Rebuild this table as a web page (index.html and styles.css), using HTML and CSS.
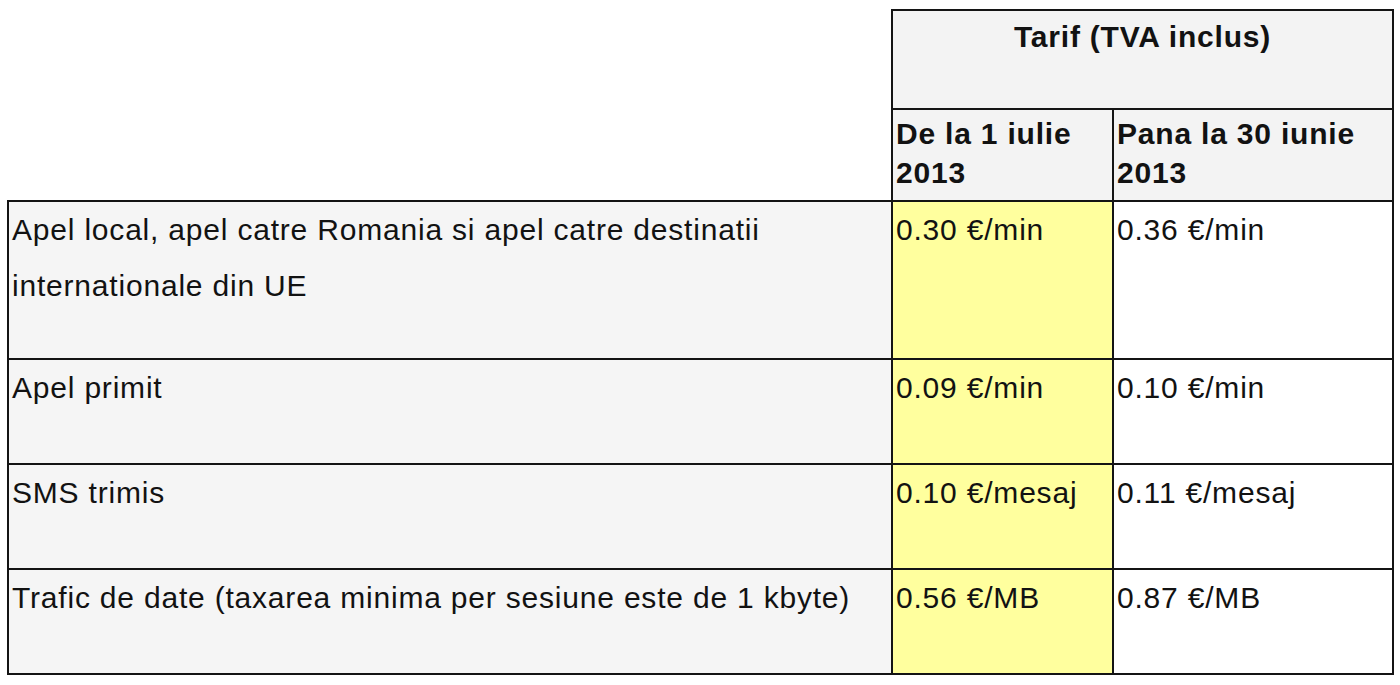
FILE: index.html
```html
<!DOCTYPE html>
<html lang="ro">
<head>
<meta charset="utf-8">
<title>Tarife roaming</title>
<link rel="stylesheet" href="styles.css">
</head>
<body>
<table class="tarife">
  <colgroup>
    <col class="col-desc">
    <col class="col-new">
    <col class="col-old">
  </colgroup>
  <thead>
    <tr class="row-head1">
      <th class="blank" rowspan="2"></th>
      <th class="head-main" colspan="2">Tarif (TVA inclus)</th>
    </tr>
    <tr class="row-head2">
      <th class="head-sub">De la 1 iulie 2013</th>
      <th class="head-sub">Pana la 30 iunie 2013</th>
    </tr>
  </thead>
  <tbody>
    <tr class="row-tall">
      <td class="desc">Apel local, apel catre Romania si apel catre destinatii internationale din UE</td>
      <td class="new">0.30 €/min</td>
      <td class="old">0.36 €/min</td>
    </tr>
    <tr class="row">
      <td class="desc">Apel primit</td>
      <td class="new">0.09 €/min</td>
      <td class="old">0.10 €/min</td>
    </tr>
    <tr class="row">
      <td class="desc">SMS trimis</td>
      <td class="new">0.10 €/mesaj</td>
      <td class="old">0.11 €/mesaj</td>
    </tr>
    <tr class="row">
      <td class="desc">Trafic de date (taxarea minima per sesiune este de 1 kbyte)</td>
      <td class="new">0.56 €/MB</td>
      <td class="old">0.87 €/MB</td>
    </tr>
  </tbody>
</table>
</body>
</html>
```

FILE: styles.css
```css
html, body {
  margin: 0;
  padding: 0;
  background: #ffffff;
}

body {
  padding: 9px 0 0 7px;
  font-family: "Liberation Sans", Arial, sans-serif;
  font-size: 30px;
  letter-spacing: 0.8px;
  color: #121212;
}

.tarife {
  border-collapse: collapse;
  table-layout: fixed;
  width: 1385px;
}

.col-desc { width: 884px; }
.col-new { width: 221px; }
.col-old { width: 280px; }

.tarife th,
.tarife td {
  border: 2px solid #141414;
  vertical-align: top;
  text-align: left;
  padding: 2px 3px;
}

.tarife th {
  font-weight: bold;
  line-height: 39px;
  background: #f3f3f3;
}

.tarife th.blank {
  border: none;
  background: #ffffff;
}

.tarife th.head-main {
  text-align: center;
  padding-top: 6px;
}

.tarife th.head-sub {
  padding-top: 4px;
}

.row-head1 { height: 99px; }
.row-head2 { height: 92px; }
.row-tall { height: 158px; }
.row { height: 105px; }

.tarife td {
  line-height: 56px;
  padding-top: 0;
}

.tarife td.desc { background: #f5f5f5; }
.tarife td.new { background: #ffff9e; }
.tarife td.old { background: #ffffff; }
```
